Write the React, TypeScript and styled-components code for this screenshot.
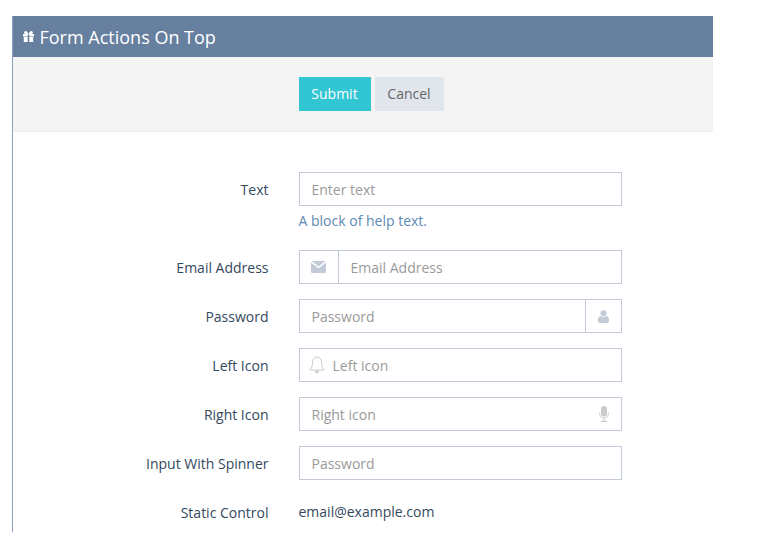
import React from 'react';
import styled, { createGlobalStyle } from 'styled-components';

const GlobalStyle = createGlobalStyle`
  html, body {
    margin: 0;
    padding: 0;
    background: #fff;
    font-family: "Open Sans", sans-serif;
    font-size: 14px;
    color: #34495e;
  }
`;

const Page = styled.div`
  padding: 16px 56px 0 12px;
`;

const Portlet = styled.div`
  height: 516px;
  overflow: hidden;
  border-left: 1px solid #8aa0ba;
`;

const Title = styled.div`
  display: flex;
  align-items: center;
  height: 41px;
  padding-left: 10px;
  gap: 5.5px;
  background: #67809f;
  color: #fff;
  font-size: 18px;
`;

const Actions = styled.div`
  display: flex;
  gap: 4px;
  height: 75px;
  padding: 20px 0 20px 286px;
  box-sizing: border-box;
  background: #f4f4f4;
  border-bottom: 1px solid #eeeeee;
`;

const Button = styled.button<{ $primary?: boolean }>`
  width: ${({ $primary }) => ($primary ? '72px' : '69px')};
  height: 34px;
  padding: 0 1px 2px 0;
  border: 0;
  background: ${({ $primary }) => ($primary ? '#32c5d2' : '#e1e5ec')};
  color: ${({ $primary }) => ($primary ? '#fff' : '#666')};
  font-family: inherit;
  font-size: 14px;
`;

const Body = styled.div`
  display: flex;
  flex-direction: column;
  padding-top: 40px;
`;

const Row = styled.div`
  display: grid;
  grid-template-columns: 256px 323px;
  column-gap: 30px;
  margin-bottom: 15px;
`;

const Label = styled.label`
  height: 34px;
  padding-right: 0.5px;
  line-height: 36px;
  text-align: right;
`;

const Help = styled.div`
  margin-top: 5px;
  margin-bottom: 4px;
  margin-left: -0.5px;
  line-height: 20px;
  color: #5e89b3;
`;

const Group = styled.div`
  display: flex;
  align-items: stretch;
  height: 34px;
  box-sizing: border-box;
  border: 1px solid #c2cad8;
`;

const Addon = styled.span<{ $side: 'left' | 'right' }>`
  display: flex;
  align-items: center;
  justify-content: center;
  width: ${({ $side }) => ($side === 'left' ? '39px' : '36px')};
  flex: none;
  box-sizing: border-box;
  padding-right: ${({ $side }) => ($side === 'left' ? '1px' : '0')};
  color: #c2cad8;
  ${({ $side }) => ($side === 'left' ? 'border-right' : 'border-left')}: 1px solid #c2cad8;
`;

const InlineIcon = styled.span<{ $side: 'left' | 'right' }>`
  display: flex;
  align-items: center;
  flex: none;
  color: #ccc;
  ${({ $side }) => ($side === 'left' ? 'padding-left: 9px;' : 'padding-right: 12px;')}
`;

const Input = styled.input<{ $indent?: number }>`
  flex: 1;
  min-width: 0;
  border: 0;
  outline: 0;
  padding: 0 0 0 ${({ $indent }) => $indent ?? 11.5}px;
  background: transparent;
  font-family: inherit;
  font-size: 14px;
  color: #555;

  &::placeholder {
    color: #9a9a9a;
    opacity: 1;
  }
`;

const Static = styled.div`
  height: 34px;
  margin-left: -0.5px;
  line-height: 34px;
  color: #34495e;
`;

const GiftIcon = () => (
  <svg width="11" height="11" viewBox="0 0 11 11" fill="currentColor">
    <path d="M0 3h4.7v2.4H0zM6.3 3H11v2.4H6.3zM0.8 6h3.9v5H0.8zM6.3 6h3.9v5H6.3z" />
    <path
      d="M5.5 3.4C4.6 0.8 3.2 -0.2 2 0.2 0.7 0.7 0.8 2.9 2.6 3.4zM5.5 3.4C6.4 0.8 7.8 -0.2 9 0.2 10.3 0.7 10.2 2.9 8.4 3.4z"
    />
  </svg>
);

const EnvelopeIcon = () => (
  <svg width="15" height="12" viewBox="0 0 15 12" fill="currentColor">
    <path d="M0.6 0H14.4L7.5 5.6zM0 1.5L7.5 7.5 15 1.5V10.8C15 11.5 14.5 12 13.8 12H1.2C0.5 12 0 11.5 0 10.8z" />
  </svg>
);

const UserIcon = () => (
  <svg width="11" height="13" viewBox="0 0 11 13" fill="currentColor">
    <circle cx="5.5" cy="3.2" r="3" />
    <path d="M0 10.6C0 8 1 6.4 2.7 6 3.4 6.7 4.4 7.1 5.5 7.1S7.6 6.7 8.3 6C10 6.4 11 8 11 10.6 11 12 10.2 13 9 13H2C0.8 13 0 12 0 10.6z" />
  </svg>
);

const BellIcon = () => (
  <svg width="16" height="18" viewBox="0 0 16 18" fill="none" stroke="currentColor" strokeWidth="1">
    <path d="M8 1C5 1 3.5 3.4 3.5 6.2 3.5 10 2.5 12 0.8 14H15.2C13.5 12 12.5 10 12.5 6.2 12.5 3.4 11 1 8 1z" />
    <path d="M6.3 14.5C6.4 16 7 16.8 8 16.8S9.6 16 9.7 14.5" fill="currentColor" />
  </svg>
);

const MicIcon = () => (
  <svg width="10" height="16" viewBox="0 0 10 16" fill="currentColor">
    <rect x="2" y="0" width="6" height="10.5" rx="3" />
    <path d="M0.6 6.5V7.5C0.6 10 2.4 12 5 12S9.4 10 9.4 7.5V6.5" fill="none" stroke="currentColor" />
    <path d="M4.5 12h1v2.8h-1zM2 14.8h6v1.2H2z" />
  </svg>
);

export default function App() {
  return (
    <>
      <GlobalStyle />
      <Page>
        <Portlet>
          <Title>
            <GiftIcon />
            Form Actions On Top
          </Title>
          <Actions>
            <Button $primary>Submit</Button>
            <Button>Cancel</Button>
          </Actions>
          <Body>
            <Row>
              <Label>Text</Label>
              <div>
                <Group>
                  <Input placeholder="Enter text" />
                </Group>
                <Help>A block of help text.</Help>
              </div>
            </Row>
            <Row>
              <Label>Email Address</Label>
              <Group>
                <Addon $side="left">
                  <EnvelopeIcon />
                </Addon>
                <Input placeholder="Email Address" />
              </Group>
            </Row>
            <Row>
              <Label>Password</Label>
              <Group>
                <Input placeholder="Password" />
                <Addon $side="right">
                  <UserIcon />
                </Addon>
              </Group>
            </Row>
            <Row>
              <Label>Left Icon</Label>
              <Group>
                <InlineIcon $side="left">
                  <BellIcon />
                </InlineIcon>
                <Input placeholder="Left icon" $indent={7.5} />
              </Group>
            </Row>
            <Row>
              <Label>Right Icon</Label>
              <Group>
                <Input placeholder="Right icon" />
                <InlineIcon $side="right">
                  <MicIcon />
                </InlineIcon>
              </Group>
            </Row>
            <Row>
              <Label>Input With Spinner</Label>
              <Group>
                <Input placeholder="Password" />
              </Group>
            </Row>
            <Row>
              <Label>Static Control</Label>
              <Static>email@example.com</Static>
            </Row>
          </Body>
        </Portlet>
      </Page>
    </>
  );
}
